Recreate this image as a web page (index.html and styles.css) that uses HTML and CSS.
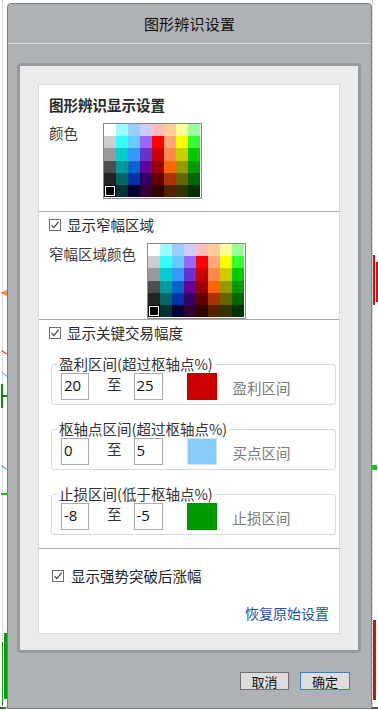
FILE: index.html
```html
<!DOCTYPE html>
<html lang="zh-CN">
<head>
<meta charset="utf-8">
<title>图形辨识设置</title>
<link rel="stylesheet" href="styles.css">
</head>
<body>
<div class="chart">
  <span class="grid-v gv-left"></span>
  <span class="grid-v gv-right"></span>
  <span class="axis-bottom"></span>
  <span class="mk mk-orange"></span>
  <span class="mk mk-red-diag"></span>
  <span class="mk mk-blue-diag"></span>
  <span class="mk mk-green-h"></span>
  <span class="mk mk-green-h2"></span>
  <span class="mk mk-teal"></span>
  <span class="mk mk-green-pt"></span>
  <span class="mk mk-green-bar"></span>
  <span class="mk mk-red-bar1"></span>
  <span class="mk mk-red-bar2"></span>
  <span class="mk mk-red-bar3"></span>
  <span class="mk mk-green-sq"></span>
</div>

<div class="dialog">
  <div class="titlebar">图形辨识设置</div>
  <div class="dbody">
    <div class="panel">
      <div class="sheet">
        <section class="sec sec1">
          <div class="heading">图形辨识显示设置</div>
          <div class="row row1">
            <span class="lbl lbl-short">颜色</span>
            <div class="palette">
              <span></span><span></span><span></span><span></span><span></span><span></span><span></span><span></span>
              <span></span><span></span><span></span><span></span><span></span><span></span><span></span><span></span>
              <span></span><span></span><span></span><span></span><span></span><span></span><span></span><span></span>
              <span></span><span></span><span></span><span></span><span></span><span></span><span></span><span></span>
              <span></span><span></span><span></span><span></span><span></span><span></span><span></span><span></span>
              <span class="sel"></span><span></span><span></span><span></span><span></span><span></span><span></span><span></span>
            </div>
          </div>
        </section>

        <section class="sec sec2">
          <label class="check">
            <svg class="cb" width="12" height="12" viewBox="0 0 12 12"><rect x="0.5" y="0.5" width="11" height="11" fill="#fff" stroke="#6e6e6e"/><path d="M2.5 6.2 L4.8 8.6 L9.6 2.8" fill="none" stroke="#3a3a3a" stroke-width="1.1"/></svg>
            <span>显示窄幅区域</span>
          </label>
          <div class="row row2">
            <span class="lbl lbl-long">窄幅区域颜色</span>
            <div class="palette">
              <span></span><span></span><span></span><span></span><span></span><span></span><span></span><span></span>
              <span></span><span></span><span></span><span></span><span></span><span></span><span></span><span></span>
              <span></span><span></span><span></span><span></span><span></span><span></span><span></span><span></span>
              <span></span><span></span><span></span><span></span><span></span><span></span><span></span><span></span>
              <span></span><span></span><span></span><span></span><span></span><span></span><span></span><span></span>
              <span class="sel"></span><span></span><span></span><span></span><span></span><span></span><span></span><span></span>
            </div>
          </div>
        </section>

        <section class="sec sec3">
          <label class="check">
            <svg class="cb" width="12" height="12" viewBox="0 0 12 12"><rect x="0.5" y="0.5" width="11" height="11" fill="#fff" stroke="#6e6e6e"/><path d="M2.5 6.2 L4.8 8.6 L9.6 2.8" fill="none" stroke="#3a3a3a" stroke-width="1.1"/></svg>
            <span>显示关键交易幅度</span>
          </label>

          <fieldset class="range">
            <legend>盈利区间(超过枢轴点%)</legend>
            <div class="range-row">
              <span class="num num1">20</span>
              <span class="to">至</span>
              <span class="num num2">25</span>
              <span class="swatch sw-red"></span>
              <span class="range-name">盈利区间</span>
            </div>
          </fieldset>

          <fieldset class="range">
            <legend>枢轴点区间(超过枢轴点%)</legend>
            <div class="range-row">
              <span class="num num1">0</span>
              <span class="to">至</span>
              <span class="num num2">5</span>
              <span class="swatch sw-blue"></span>
              <span class="range-name">买点区间</span>
            </div>
          </fieldset>

          <fieldset class="range">
            <legend>止损区间(低于枢轴点%)</legend>
            <div class="range-row">
              <span class="num num1">-8</span>
              <span class="to">至</span>
              <span class="num num2">-5</span>
              <span class="swatch sw-green"></span>
              <span class="range-name">止损区间</span>
            </div>
          </fieldset>
        </section>

        <section class="sec sec4">
          <label class="check check-big">
            <svg class="cb" width="12" height="12" viewBox="0 0 12 12"><rect x="0.5" y="0.5" width="11" height="11" fill="#fff" stroke="#6e6e6e"/><path d="M2.5 6.2 L4.8 8.6 L9.6 2.8" fill="none" stroke="#3a3a3a" stroke-width="1.1"/></svg>
            <span>显示强势突破后涨幅</span>
          </label>
          <div class="restore"><a class="link">恢复原始设置</a></div>
        </section>
      </div>
    </div>
    <div class="footer">
      <button class="btn">取消</button>
      <button class="btn btn-primary">确定</button>
    </div>
  </div>
</div>
</body>
</html>
```

FILE: styles.css
```css
* { box-sizing: border-box; }

html, body {
  margin: 0;
  padding: 0;
}

body {
  width: 378px;
  height: 710px;
  overflow: hidden;
  position: relative;
  background: #ffffff;
  font-family: "Noto Sans CJK SC", "Noto Sans", sans-serif;
  color: #333;
}

/* ---------- chart behind the dialog ---------- */
.chart {
  position: absolute;
  inset: 0;
  z-index: 0;
}
.grid-v {
  position: absolute;
  top: 0;
  bottom: 0;
  width: 0;
  border-left: 1px dotted #b9b9b9;
}
.gv-left { left: 2px; }
.gv-right { left: 372px; }
.axis-bottom {
  position: absolute;
  left: 0;
  right: 0;
  top: 707px;
  height: 2px;
  background: repeating-linear-gradient(90deg, #555 0 6px, #c8c8c8 6px 8px, #3a6ea5 8px 9px, #999 9px 12px);
}
.mk { position: absolute; }
.mk-orange {
  left: 0; top: 290px; width: 0; height: 0;
  border-top: 3px solid transparent;
  border-bottom: 3px solid transparent;
  border-right: 7px solid #ee8a4a;
}
.mk-red-diag {
  left: 1px; top: 352px; width: 7px; height: 1px;
  background: #d83030; transform: rotate(30deg);
}
.mk-blue-diag {
  left: 1px; top: 374px; width: 7px; height: 1px;
  background: #7ab8e0; transform: rotate(40deg);
}
.mk-green-h {
  left: 1px; top: 384px; width: 2px; height: 24px; background: #0b8a0b;
}
.mk-green-h2 {
  left: 3px; top: 395px; width: 4px; height: 2px; background: #0b8a0b;
  box-shadow: 3px 0 0 0 #0b8a0b;
}
.mk-teal {
  left: 1px; top: 467px; width: 6px; height: 1px;
  background: #4aa8b0; transform: rotate(35deg);
}
.mk-green-pt {
  left: 1px; top: 493px; width: 6px; height: 2px; background: #22bb22;
}
.mk-green-bar {
  left: 4px; top: 633px; width: 3px; height: 66px; background: #119911;
  box-shadow: -3px 8px 0 -1px #119911;
}
.mk-red-bar1 {
  left: 373px; top: 255px; width: 2px; height: 50px; background: #cc1111;
}
.mk-red-bar2 {
  left: 376px; top: 262px; width: 2px; height: 40px; background: #cc1111;
}
.mk-red-bar3 {
  left: 373px; top: 620px; width: 3px; height: 80px; background: #cc1111;
}
.mk-green-sq {
  left: 372px; top: 465px; width: 5px; height: 5px; background: #22bb22;
}

/* ---------- dialog ---------- */
.dialog {
  position: relative;
  z-index: 1;
  margin: 3px 0 0 7px;
  width: 365px;
  height: 706px;
  background: #afb2b5;
  border: 1px solid #7c7f82;
  border-radius: 4px 4px 0 0;
  display: flex;
  flex-direction: column;
}

.titlebar {
  height: 40px;
  border-bottom: 1px solid #d3d5d7;
  display: flex;
  align-items: center;
  justify-content: center;
  font-size: 15px;
  color: #111;
  letter-spacing: 0.2px;
}

.dbody {
  flex: 1;
  padding: 19px 10px 0 9px;
  display: flex;
  flex-direction: column;
}

.panel {
  width: 344px;
  height: 590px;
  background: #ebebeb;
  border: 3px solid #96999d;
  border-radius: 4px;
  padding: 18px 18px 16px 18px;
}

.sheet {
  height: 550px;
  background: #ffffff;
  border: 1px solid #dadada;
  display: flex;
  flex-direction: column;
}

.sec {
  border-bottom: 1px solid #a9a9a9;
  padding-left: 10px;
}

.sec1 { padding-top: 10px; padding-bottom: 12px; }
.sec2 { padding-top: 3px; padding-bottom: 0; }
.sec3 { padding-top: 3px; padding-bottom: 13px; }
.sec4 { padding-top: 17px; border-bottom: none; flex: 1; }

.heading {
  font-size: 14.5px;
  line-height: 20px;
  font-weight: 700;
  color: #2a2a2a;
}

.row {
  display: flex;
  align-items: flex-start;
  margin-top: 8px;
}

.lbl {
  font-size: 14.5px;
  line-height: 20px;
  color: #3c3c3c;
}
.lbl-short { width: 54px; }
.lbl-long { width: 98px; margin-top: 1px; }

/* colour palette */
.palette {
  width: 99px;
  height: 76px;
  border: 1px solid #8a8a8a;
  padding: 0 1px 1px 0;
  display: grid;
  grid-template-columns: repeat(8, 1fr);
  grid-template-rows: repeat(6, 1fr);
  background: #fff;
}
.palette span:nth-child(1)  { background: #ffffff; }
.palette span:nth-child(2)  { background: #99ffff; }
.palette span:nth-child(3)  { background: #99ccff; }
.palette span:nth-child(4)  { background: #ccccff; }
.palette span:nth-child(5)  { background: #ffbbbb; }
.palette span:nth-child(6)  { background: #ffcc99; }
.palette span:nth-child(7)  { background: #ffff99; }
.palette span:nth-child(8)  { background: #99ff99; }
.palette span:nth-child(9)  { background: #cccccc; }
.palette span:nth-child(10) { background: #33ffff; }
.palette span:nth-child(11) { background: #66ccff; }
.palette span:nth-child(12) { background: #9966ff; }
.palette span:nth-child(13) { background: #ff0000; }
.palette span:nth-child(14) { background: #ffa67a; }
.palette span:nth-child(15) { background: #ffff00; }
.palette span:nth-child(16) { background: #33ff33; }
.palette span:nth-child(17) { background: #999999; }
.palette span:nth-child(18) { background: #00cccc; }
.palette span:nth-child(19) { background: #3399ff; }
.palette span:nth-child(20) { background: #6633cc; }
.palette span:nth-child(21) { background: #cc0000; }
.palette span:nth-child(22) { background: #ff884d; }
.palette span:nth-child(23) { background: #cccc00; }
.palette span:nth-child(24) { background: #00cc00; }
.palette span:nth-child(25) { background: #4d4d4d; }
.palette span:nth-child(26) { background: #009999; }
.palette span:nth-child(27) { background: #0066cc; }
.palette span:nth-child(28) { background: #660099; }
.palette span:nth-child(29) { background: #990000; }
.palette span:nth-child(30) { background: #ff6600; }
.palette span:nth-child(31) { background: #999900; }
.palette span:nth-child(32) { background: #009900; }
.palette span:nth-child(33) { background: #242424; }
.palette span:nth-child(34) { background: #006666; }
.palette span:nth-child(35) { background: #0033aa; }
.palette span:nth-child(36) { background: #330066; }
.palette span:nth-child(37) { background: #660000; }
.palette span:nth-child(38) { background: #aa3300; }
.palette span:nth-child(39) { background: #666600; }
.palette span:nth-child(40) { background: #006600; }
.palette span:nth-child(41) { background: #000000; }
.palette span:nth-child(42) { background: #003333; }
.palette span:nth-child(43) { background: #000033; }
.palette span:nth-child(44) { background: #330033; }
.palette span:nth-child(45) { background: #330000; }
.palette span:nth-child(46) { background: #552200; }
.palette span:nth-child(47) { background: #333300; }
.palette span:nth-child(48) { background: #003300; }
.palette span.sel {
  box-shadow: inset 0 0 0 1px #000, inset 0 0 0 2px #fff;
}

/* checkboxes */
.check {
  display: flex;
  align-items: center;
  gap: 6px;
  font-size: 14.5px;
  line-height: 20px;
  color: #2a2a2a;
}
.cb { flex: none; display: block; }
.check-big { padding-left: 3px; gap: 7px; color: #222; }

/* fieldsets */
.range {
  margin: 12px 3px 0 2px;
  padding: 0 0 4px 9px;
  border: 1px solid #d2dce3;
  border-radius: 3px;
  min-width: 0;
}
.range + .range { margin-top: 15px; }
.range legend {
  padding: 0 2px;
  margin-left: -4px;
  font-size: 14.5px;
  line-height: 18px;
  color: #333;
}

.range-row {
  display: flex;
  align-items: flex-start;
  height: 27px;
}

.num {
  height: 27px;
  border: 1px solid #aaaaaa;
  background: #fff;
  font-family: "Open Sans", "Noto Sans", sans-serif;
  font-size: 15px;
  line-height: 23px;
  padding-left: 2px;
  color: #111;
}
.num1 { width: 28px; }
.num2 { width: 29px; margin-left: 12px; }

.to {
  margin-left: 18px;
  margin-top: 1px;
  font-size: 14.5px;
  line-height: 20px;
  color: #333;
}

.swatch {
  width: 30px;
  height: 27px;
  margin-left: 24px;
  border: 1px solid rgba(0, 0, 0, 0.06);
}
.sw-red { background: #cc0000; }
.sw-blue { background: #88ccfb; border-color: #c8e4f6; }
.sw-green { background: #009900; }

.range-name {
  margin-left: 16px;
  margin-top: 5px;
  font-size: 14.5px;
  line-height: 20px;
  color: #7a7a7a;
}

.restore {
  display: flex;
  justify-content: flex-end;
  padding-right: 10px;
  margin-top: 17px;
}
.link {
  font-size: 14px;
  line-height: 20px;
  color: #1f4fa8;
}

/* footer */
.footer {
  display: flex;
  justify-content: flex-end;
  gap: 11px;
  padding-top: 19px;
  padding-right: 11px;
}
.btn {
  width: 49px;
  height: 18px;
  padding: 0;
  margin: 0;
  border: 1px solid #707070;
  background: #dddddd;
  font-family: "Noto Sans CJK SC", sans-serif;
  font-size: 13px;
  line-height: 15px;
  color: #111;
  border-radius: 0;
}
.btn-primary {
  width: 50px;
  border-color: #3b7fd2;
}
```
